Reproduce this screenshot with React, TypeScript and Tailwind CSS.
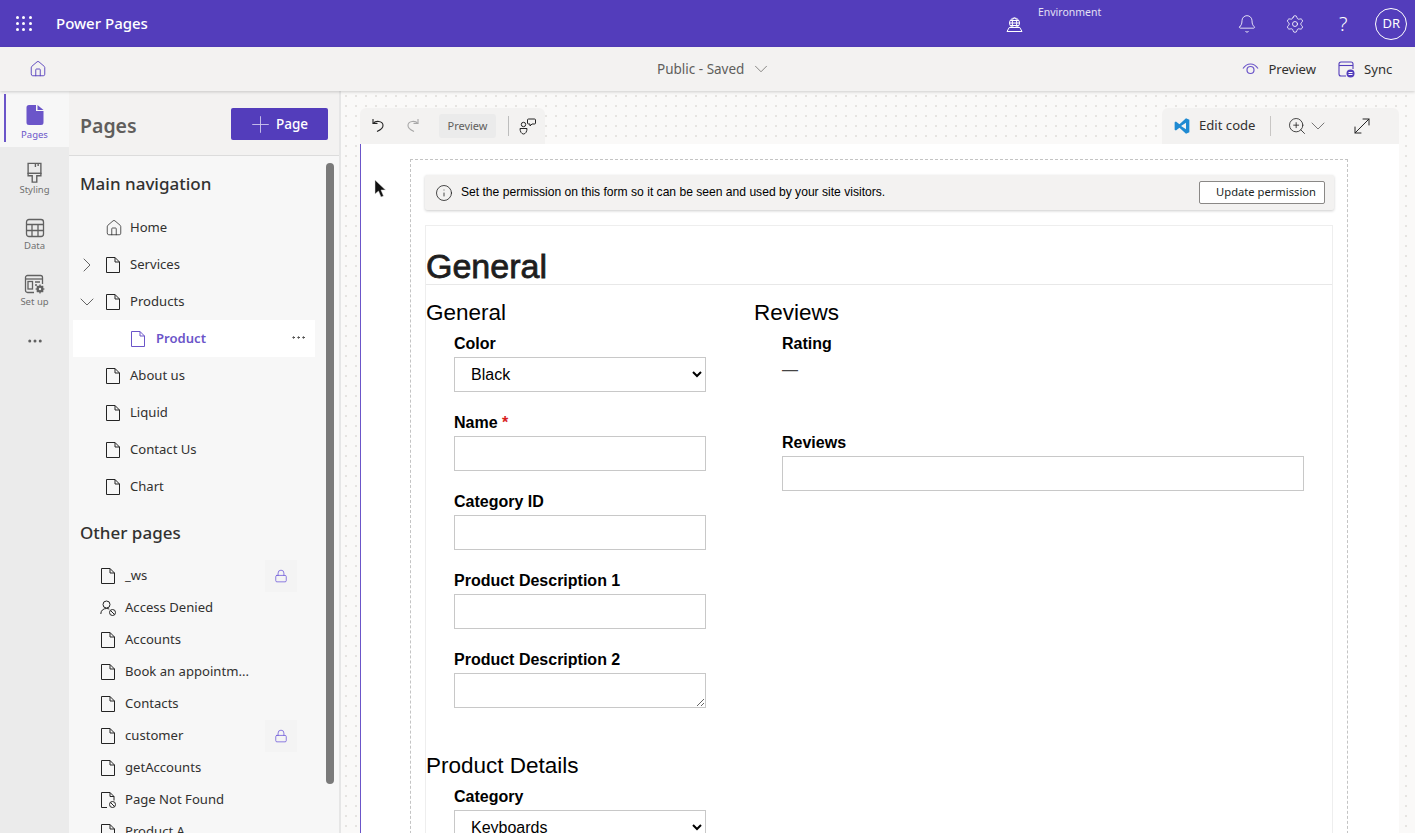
import { ReactNode } from 'react';
import { ChevronDown, ChevronRight, Ellipsis, Home, Plus, ZoomIn, Bell, Settings, Lock, Info, MoveDiagonal } from 'lucide-react';

const PageIcon = ({ color = '#242424', size = 16 }: { color?: string; size?: number }) => (
  <svg width={size} height={size} viewBox="0 0 16 16" fill="none" stroke={color} strokeWidth="1">
    <path d="M1.500 0.500h8.500l4.500 4.500v10.500h-13z" />
    <path d="M10 0.500v4.500h4.500" />
  </svg>
);

const BlockedPageIcon = () => (
  <svg width="17" height="16" viewBox="0 0 17 16" fill="none" stroke="#242424" strokeWidth="1">
    <path d="M7 15.500H1.500V0.500H10l4 4v4" />
    <path d="M10 0.500v4h4" />
    <circle cx="12.500" cy="12.500" r="3" />
    <path d="M10.500 10.500l4 4" />
  </svg>
);

const PersonBlockedIcon = () => (
  <svg width="17" height="16" viewBox="0 0 17 16" fill="none" stroke="#242424" strokeWidth="1">
    <circle cx="6.500" cy="4.500" r="3.500" />
    <path d="M0.800 14c0-3.500 2.500-5.500 5.700-5.500 1 0 2 .2 2.800.6" />
    <circle cx="12.500" cy="12.500" r="3" />
    <path d="M10.500 10.500l4 4" />
  </svg>
);

const railItems = [
  { label: 'Styling', icon: (
    <svg width="15" height="21" viewBox="2 0 16 23" fill="none" stroke="#616161" strokeWidth="1.500">
      <path d="M3 1.500h14v11H3z" />
      <path d="M3 12.500h14v2.500h-4.500v7h-5v-7H3z" />
      <path d="M11 1.500v4M14 1.500v3" />
    </svg>
  ) },
  { label: 'Data', icon: (
    <svg width="20" height="20" viewBox="0 0 20 20" fill="none" stroke="#616161" strokeWidth="1.300">
      <rect x="1.500" y="1.500" width="17" height="17" rx="2.500" />
      <path d="M1.500 6.500h17M1.500 12.500h17M7 6.500v12M13 6.500v12" />
    </svg>
  ) },
  { label: 'Set up', icon: (
    <svg width="22" height="20" viewBox="0 0 22 20" fill="none" stroke="#616161" strokeWidth="1.300">
      <path d="M10 18.500H3.500a2 2 0 0 1-2-2v-13a2 2 0 0 1 2-2h13a2 2 0 0 1 2 2V10" />
      <path d="M1.500 5h17" />
      <rect x="4" y="7.500" width="4.500" height="7.500" />
      <path d="M11 8h5M11 11h2" />
      <circle cx="16" cy="15" r="3.600" fill="#616161" stroke="none" />
      <path d="M16 10.500v9M11.500 15h9M12.800 11.800l6.400 6.400M19.200 11.800l-6.400 6.400" strokeWidth="1.200" />
      <circle cx="16" cy="15" r="1.200" fill="#ebebeb" stroke="none" />
    </svg>
  ) },
];

const mainNav: { label: string; chevron?: 'right' | 'down' }[] = [
  { label: 'Home' },
  { label: 'Services', chevron: 'right' },
  { label: 'Products', chevron: 'down' },
];

const mainNavBottom = ['About us', 'Liquid', 'Contact Us', 'Chart'];

const otherPages: { label: string; icon?: ReactNode; locked?: boolean }[] = [
  { label: '_ws', locked: true },
  { label: 'Access Denied', icon: <PersonBlockedIcon /> },
  { label: 'Accounts' },
  { label: 'Book an appointm...' },
  { label: 'Contacts' },
  { label: 'customer', locked: true },
  { label: 'getAccounts' },
  { label: 'Page Not Found', icon: <BlockedPageIcon /> },
  { label: 'Product A' },
];

const Field = ({ label, required, children }: { label: string; required?: boolean; children: ReactNode }) => (
  <div className="mb-[20px]">
    <div className="h-[24px] pt-px text-[16px] leading-[20px] font-bold text-black">
      {label}
      {required && <span className="text-[#d81e1e]"> *</span>}
    </div>
    {children}
  </div>
);

const inputClass = 'block w-[252px] h-[35px] border border-[#c8c8c8] bg-white';
const h2Class = 'h-[33px] text-[22.500px] leading-[25px]';

export default function App() {
  return (
    <div className="relative h-[833px] w-[1415px] overflow-hidden bg-white font-['Noto_Sans',sans-serif] text-[#323130]">
      {/* top bar */}
      <header className="flex h-[47px] items-center bg-[#533DBB] text-white">
        <div className="ml-[16px] grid w-[16px] grid-cols-3 gap-[3px]">
          {Array.from({ length: 9 }).map((_, i) => (
            <span key={i} className="h-[3px] w-[3px] rounded-full bg-white" />
          ))}
        </div>
        <span className="ml-[24px] text-[15px] font-medium">Power Pages</span>
        <div className="ml-[858px] flex h-full items-start">
          <svg className="mt-[17px]" width="17" height="15" viewBox="0 0 17 15" fill="none" stroke="white" strokeWidth="1">
            <circle cx="8.500" cy="6" r="5" />
            <ellipse cx="8.500" cy="6" rx="2.200" ry="5" />
            <path d="M3.500 6h10M4.200 3.500h8.600M4.200 8.500h8.600" />
            <path d="M1 14.500l2.200-4h10.600l2.200 4z" fill="#533DBB" />
          </svg>
          <span className="ml-[15px] mt-[5px] text-[10.500px] leading-[15px] text-[#e4e0f5]">Environment</span>
        </div>
        <Bell className="ml-[136px]" size={20} strokeWidth={1} />
        <Settings className="ml-[28px]" size={20} strokeWidth={1} />
        <span className="ml-[32px] w-[12px] text-center text-[20px] font-light leading-none">?</span>
        <div className="ml-[26px] flex h-[32px] w-[32px] items-center justify-center rounded-full border border-white text-[13px]">DR</div>
      </header>

      {/* command bar */}
      <div className="relative z-10 flex h-[44px] items-center bg-[#f3f2f1] shadow-[0_1px_3px_rgba(0,0,0,0.18)]">
        <Home className="ml-[29px]" size={18} color="#533DBB" strokeWidth={1.200} />
        <div className="ml-[610px] flex items-center text-[13.500px] text-[#605e5c]">
          <span className="pt-px">Public - Saved</span>
          <ChevronDown className="ml-[6px]" size={22} strokeWidth={0.800} />
        </div>
        <svg className="ml-[470px]" width="17" height="12" viewBox="0 0 17 12" fill="none" stroke="#6b55c9" strokeWidth="1.200">
          <path d="M1 5.500C3 2.500 5.500 1 8.500 1s5.500 1.500 7.500 4.500" />
          <circle cx="8.500" cy="7" r="3.500" />
        </svg>
        <span className="ml-[9px] pt-px text-[13.100px] text-[#323130]">Preview</span>
        <svg className="ml-[22px]" width="17" height="17" viewBox="0 0 17 17" fill="none" stroke="#533DBB" strokeWidth="1.100">
          <path d="M8 15H3a2 2 0 0 1-2-2V3a2 2 0 0 1 2-2h10a2 2 0 0 1 2 2v5" />
          <path d="M1 4.500h14" />
          <circle cx="12.500" cy="12.500" r="4" fill="#533DBB" stroke="none" />
          <path d="M10.500 11.500h4M10.500 13.500h4" stroke="white" />
        </svg>
        <span className="ml-[9px] pt-px text-[13.100px] text-[#323130]">Sync</span>
      </div>

      <div className="flex h-[742px]">
        {/* icon rail */}
        <nav className="flex w-[69px] shrink-0 flex-col items-center bg-[#ebebeb]">
          <div className="relative flex h-[56px] w-full flex-col items-center bg-[#f7f7f7] pt-[14px]">
            <span className="absolute left-[4px] top-[3px] h-[48px] w-[2px] bg-[#6b55c9]" />
            <svg width="18" height="20" viewBox="0 0 18 20">
              <path d="M3 0h7v6h7.500v11.500a2.500 2.500 0 0 1-2.500 2.500H3a2.500 2.500 0 0 1-2.500-2.500V2.500A2.500 2.500 0 0 1 3 0z" fill="#6b55c9" />
              <path d="M11.500 0l6 5h-6z" fill="#6b55c9" />
            </svg>
            <span className="mt-[4px] text-[9.500px] leading-[12px] text-[#6b55c9]">Pages</span>
          </div>
          {railItems.map(item => (
            <div key={item.label} className="flex h-[56px] w-full flex-col items-center pt-[15px]">
              <span className="block h-[22px]">{item.icon}</span>
              <span className="text-[9.500px] leading-[12px] text-[#707070]">{item.label}</span>
            </div>
          ))}
          <Ellipsis className="mt-[17px]" size={18} color="#616161" />
        </nav>

        {/* pages panel */}
        <aside className="relative w-[272px] shrink-0 overflow-hidden border-r-[2px] border-[#e6e6e6] bg-[#f7f7f7]">
          <div className="flex h-[65px] items-start justify-between border-b border-[#dcdcdc] bg-[#f3f2f1] pl-[11px] pr-[11px] pt-[17px]">
            <span className="mt-[4px] text-[19.500px] leading-[28px] font-semibold text-[#605e5c]">Pages</span>
            <div className="flex h-[32px] w-[97px] items-center rounded-[2px] bg-[#533DBB] pl-[16px] text-[13.500px] font-medium text-white">
              <Plus className="shrink-0" size={27} strokeWidth={0.800} color="#cfc8ee" />
              <span className="ml-[2px]">Page</span>
            </div>
          </div>
          <div className="pl-[11px] pt-[17px]">
            <div className="text-[17px] font-medium leading-[22px] text-[#323130]">Main navigation</div>
            <div className="mt-[14px]">
              {mainNav.map(item => (
                <div key={item.label} className="flex h-[37px] items-center text-[13.100px]">
                  <span className="flex w-[13px] justify-center">
                    {item.chevron === 'right' && <ChevronRight className="shrink-0" size={24} strokeWidth={0.700} color="#242424" />}
                    {item.chevron === 'down' && <ChevronDown className="shrink-0" size={24} strokeWidth={0.700} color="#242424" />}
                  </span>
                  <span className="ml-[12px] flex w-[25px] items-center">
                    {item.label === 'Home' ? <Home size={18} strokeWidth={1} color="#242424" /> : <PageIcon />}
                  </span>
                  <span>{item.label}</span>
                </div>
              ))}
              <div className="-ml-[7px] flex h-[37px] w-[242px] items-center bg-white text-[13.100px]">
                <span className="ml-[57px] w-[26px]"><PageIcon color="#6b55c9" /></span>
                <span className="font-semibold text-[#6b55c9]">Product</span>
                <Ellipsis className="-mt-[3px] ml-auto mr-[8px]" size={17} strokeWidth={1.300} />
              </div>
              {mainNavBottom.map(label => (
                <div key={label} className="flex h-[37px] items-center text-[13.100px]">
                  <span className="ml-[25px] flex w-[25px] items-center"><PageIcon /></span>
                  <span>{label}</span>
                </div>
              ))}
            </div>
            <div className="mt-[17px] text-[17px] font-medium leading-[22px] text-[#323130]">Other pages</div>
            <div className="mt-[16px]">
              {otherPages.map(item => (
                <div key={item.label} className="flex h-[32px] items-center text-[13.100px]">
                  <span className="ml-[20px] flex w-[25px] items-center">{item.icon ?? <PageIcon />}</span>
                  <span>{item.label}</span>
                  {item.locked && (
                    <span className="ml-auto mr-[42px] flex h-[32px] w-[32px] items-center justify-center bg-[#f4f4f4]">
                      <Lock size={14} strokeWidth={1.300} color="#6b55d9" />
                    </span>
                  )}
                </div>
              ))}
            </div>
          </div>
          <div className="absolute left-[257px] top-[72px] h-[621px] w-[8px] rounded-full bg-[#7a7a7a]" />
        </aside>

        {/* canvas */}
        <main className="min-w-0 flex-1 bg-[#faf9f8] bg-[radial-gradient(#e6e4e1_1px,transparent_1px)] bg-[length:10px_10px] pl-[19px] pr-[16px] pt-[17px]">
          <div className="flex h-[36px] items-stretch justify-between">
            <div className="flex w-[185px] items-center rounded-t-[6px] bg-[#f3f2f1] pl-[10px]">
              <svg className="-mt-[2px]" width="16" height="16" viewBox="0 0 16 16" fill="none" stroke="#242424" strokeWidth="1.100">
                <path d="M3 2v4.500h4.500" />
                <path d="M3 6.500C5.500 3.500 12.500 3.500 13 8c.3 3-2.500 5-6 6.500" />
              </svg>
              <svg className="-mt-[2px] ml-[19px]" width="16" height="16" viewBox="0 0 16 16" fill="none" stroke="#a8a8a8" strokeWidth="1.100">
                <path d="M13 2v4.500H8.500" />
                <path d="M13 6.500C10.500 3.500 3.500 3.500 3 8c-.3 3 2.500 5 6 6.500" />
              </svg>
              <span className="ml-[18px] flex h-[24px] w-[57px] items-center justify-center rounded-[3px] bg-[#ebebeb] text-[11px] text-[#605e5c]">Preview</span>
              <span className="ml-[12px] h-[20px] w-px bg-[#bdbdbd]" />
              <svg className="ml-[10px]" width="17" height="17" viewBox="0 0 17 17" fill="none" stroke="#242424" strokeWidth="1">
                <circle cx="4.500" cy="6.500" r="2.200" />
                <path d="M1 10.500h7c0 3-1.500 5.500-3.500 5.500S1 13.500 1 10.500z" />
                <path d="M9.500 1h6a1 1 0 0 1 1 1v3a1 1 0 0 1-1 1h-2.500l-2 2v-2h-1.500a1 1 0 0 1-1-1V2a1 1 0 0 1 1-1z" />
              </svg>
            </div>
            <div className="flex w-[237px] items-center rounded-t-[6px] bg-[#f3f2f1] pl-[12px]">
              <svg width="16" height="16" viewBox="0 0 100 100">
                <path d="M96 11L75 1 34 39 12 22 4 27v46l8 5 22-17 41 38 21-10V11zM75 71L44 50l31-21v42z" fill="#1f8ad2" />
              </svg>
              <span className="ml-[9px] text-[13.100px] text-[#323130]">Edit code</span>
              <span className="ml-[14px] h-[20px] w-px bg-[#c8c6c4]" />
              <ZoomIn className="ml-[16px]" size={20} strokeWidth={1} color="#242424" />
              <ChevronDown className="-ml-px shrink-0" size={24} strokeWidth={0.700} color="#424242" />
              <MoveDiagonal className="ml-[20px] shrink-0" size={24} strokeWidth={1} color="#242424" />
            </div>
          </div>

          <div className="relative h-[689px] overflow-hidden border-l-[1.500px] border-[#6b55c9] bg-white pl-[49px] pt-[15px]">
            {/* mouse pointer from the capture */}
            <svg className="absolute left-[13px] top-[35px]" width="13" height="19" viewBox="0 0 13 19">
              <path d="M1 1v14l3.500-3 2.500 6 2.500-1-2.500-6h4.500z" fill="#111" stroke="#ddd" strokeWidth="0.500" />
            </svg>

            <div className="h-[700px] w-[938px] border border-dashed border-[#c4c4c4] px-[14px] pt-[15px]">
              <div className="flex h-[35px] w-[909px] items-center rounded-[2px] bg-[#f3f2f1] pl-[10px] pr-[9px] font-['Liberation_Sans',sans-serif] shadow-[0_1px_3px_rgba(0,0,0,0.2)]">
                <Info size={18} strokeWidth={1} color="#111" />
                <span className="ml-[8px] text-[12.100px] text-black">Set the permission on this form so it can be seen and used by your site visitors.</span>
                <span className="ml-auto flex h-[23px] w-[126px] items-center justify-end rounded-[2px] border border-[#8a8886] bg-white pr-[8px] font-['Noto_Sans',sans-serif] text-[11.200px] text-[#201f1e]">Update permission</span>
              </div>

              <div className="mt-[15px] w-[908px] border border-b-0 border-[#eeeeee] font-['Liberation_Sans',sans-serif] text-black">
                <div className="flex h-[59px] items-end border-b border-[#e8e8e8]">
                  <h1 className="text-[34px] leading-[36px] text-[#1e1e1e] [-webkit-text-stroke:0.800px_#1e1e1e]">General</h1>
                </div>
                <div className="flex pt-[15px]">
                  <div className="w-[328px]">
                    <h2 className={h2Class}>General</h2>
                    <div className="pl-[28px]">
                      <Field label="Color">
                        <select className={`${inputClass} pl-[12px] text-[16px] text-black`} defaultValue="Black">
                          <option>Black</option>
                        </select>
                      </Field>
                      <Field label="Name" required><div className={inputClass} /></Field>
                      <Field label="Category ID"><div className={inputClass} /></Field>
                      <Field label="Product Description 1"><div className={inputClass} /></Field>
                      <Field label="Product Description 2">
                        <textarea className={inputClass} readOnly />
                      </Field>
                    </div>
                    <h2 className={`mt-[45px] ${h2Class}`}>Product Details</h2>
                    <div className="pl-[28px]">
                      <Field label="Category">
                        <select className={`${inputClass} pl-[12px] text-[16px] text-black`} defaultValue="Keyboards">
                          <option>Keyboards</option>
                        </select>
                      </Field>
                    </div>
                  </div>
                  <div className="flex-1">
                    <h2 className={h2Class}>Reviews</h2>
                    <div className="pl-[28px]">
                      <div className="h-[24px] pt-px text-[16px] leading-[20px] font-bold">Rating</div>
                      <div className="h-[75px] pt-[3px] text-[16px] leading-[20px] text-[#444]">—</div>
                      <div className="h-[24px] pt-px text-[16px] leading-[20px] font-bold">Reviews</div>
                      <div className="h-[35px] w-[522px] border border-[#c8c8c8]" />
                    </div>
                  </div>
                </div>
              </div>
            </div>
          </div>
        </main>
      </div>
    </div>
  );
}
